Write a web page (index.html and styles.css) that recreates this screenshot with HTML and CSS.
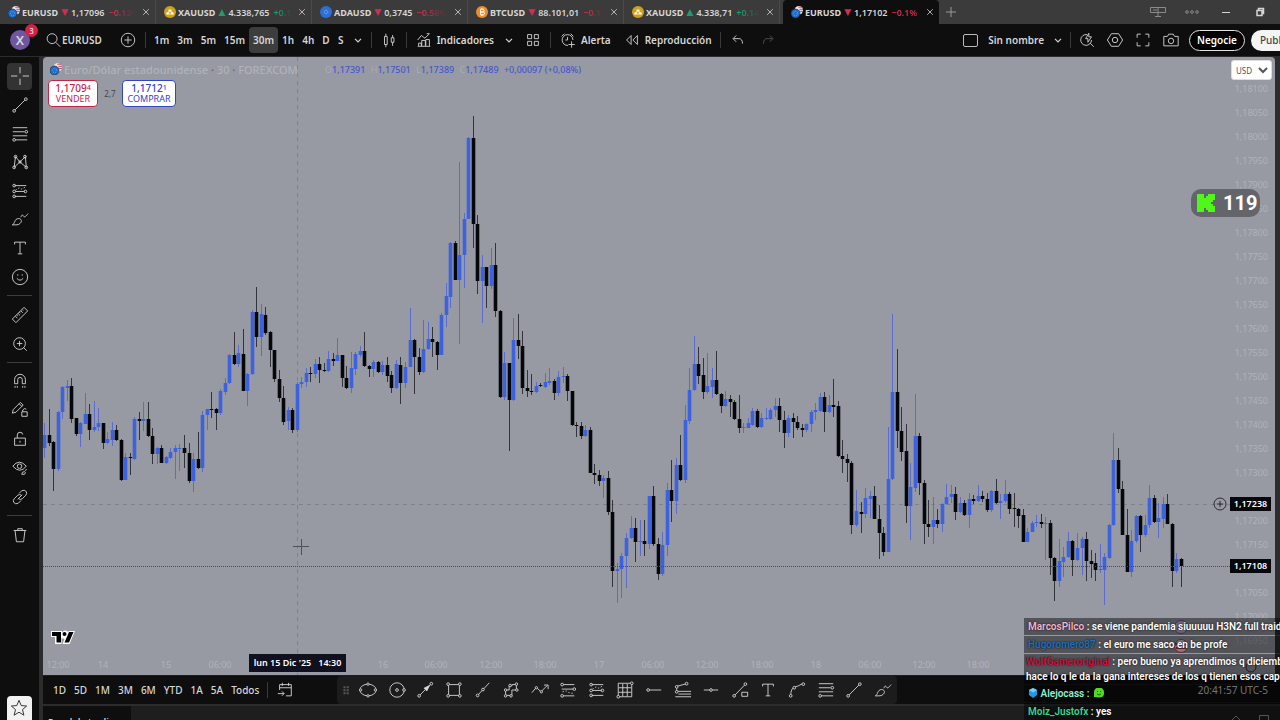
FILE: index.html
```html
<!DOCTYPE html>
<html lang="es">
<head>
  <meta charset="UTF-8">
  <meta name="viewport" content="width=device-width, initial-scale=1.0">
  <title>EURUSD 1,17102</title>
  <link rel="stylesheet" href="styles.css">
</head>
<body>
  <!-- Icon set -->
  <svg class="sprite" aria-hidden="true">
    <symbol id="i-close" viewBox="0 0 20 20"><path d="M3 3l14 14M17 3L3 17"/></symbol>
    <symbol id="i-chev" viewBox="0 0 20 20"><path d="M5 8l5 5 5-5"/></symbol>
    <symbol id="i-search" viewBox="0 0 20 20"><circle cx="9" cy="8.500" r="5.500"/><path d="M13 12.500l5 5"/></symbol>
    <symbol id="i-pluscircle" viewBox="0 0 20 20"><circle cx="10" cy="10" r="7.500"/><path d="M10 6v8M6 10h8"/></symbol>
    <symbol id="i-candles" viewBox="0 0 20 20"><path d="M5 6h3v9H5zM6.500 3v3M6.500 15v3M12.500 7.500h3v5h-3zM14 4.500v3M14 12.500v4"/></symbol>
    <symbol id="i-ind" viewBox="0 0 20 20"><path d="M3 10l4-5 4 3 5-5M13 3h3M4 16.500v-3h3v3M7.500 16.500v-6h4v6M12 16.500v-7h4v7M3 17h14"/></symbol>
    <symbol id="i-grid4" viewBox="0 0 20 20"><path d="M4 4h4.500v4.500H4zM11.500 4H16v4.500h-4.500zM4 11.500h4.500V16H4zM11.500 11.500H16V16h-4.500z"/></symbol>
    <symbol id="i-alarm" viewBox="0 0 20 20"><path d="M15.500 10A6 6 0 1 0 10 16M9.500 6.500V10H7M3 6l3-3M13 3l3 3M14 11.500v7M10.500 15h7"/></symbol>
    <symbol id="i-rewind" viewBox="0 0 20 20"><path d="M9 5v10l-5-5zM16 5v10l-5-5z"/></symbol>
    <symbol id="i-undo" viewBox="0 0 20 20"><path d="M8 5L4.500 8.500 8 12M5 8.500h6q4 0 4 5.500"/></symbol>
    <symbol id="i-redo" viewBox="0 0 20 20"><path d="M12 5l3.500 3.500L12 12M15 8.500H9q-4 0-4 5.500"/></symbol>
    <symbol id="i-quick" viewBox="0 0 20 20"><path d="M10 4a6 6 0 1 0 5 6M13.500 13.500l4 4M12 2.500L8.500 8.500H11v4l4-6h-3z"/></symbol>
    <symbol id="i-hex" viewBox="0 0 20 20"><path d="M6 3h8l4.500 7-4.500 7H6L1.500 10z"/><circle cx="10" cy="10" r="3"/></symbol>
    <symbol id="i-full" viewBox="0 0 20 20"><path d="M3.500 7.500v-4h4M12.500 3.500h4v4M16.500 12.500v4h-4M7.500 16.500h-4v-4"/></symbol>
    <symbol id="i-camera" viewBox="0 0 20 20"><path d="M2 6h4l1.500-2.500h5L14 6h4v10.500H2z"/><circle cx="10" cy="11" r="3"/></symbol>
    <symbol id="i-cross" viewBox="0 0 20 20"><path d="M10 0v7M10 13v7M0 10h7M13 10h7"/></symbol>
    <symbol id="i-trend" viewBox="0 0 20 20"><circle cx="3.500" cy="16.500" r="1.500"/><circle cx="16.500" cy="3.500" r="1.500"/><path d="M4.600 15.400L15.400 4.600"/></symbol>
    <symbol id="i-fib" viewBox="0 0 20 20"><path d="M2 3h16M2 7.500h13M2 12h16M5 16.500h13"/><circle cx="17" cy="7.500" r="1.500"/><circle cx="3.500" cy="16.500" r="1.500"/></symbol>
    <symbol id="i-pattern" viewBox="0 0 20 20"><path d="M5 4L3.500 16 16 4l1 12L10 10 5 4"/><circle cx="5" cy="4" r="1.500"/><circle cx="3.500" cy="16" r="1.500"/><circle cx="15.500" cy="4" r="1.500"/><circle cx="17" cy="16" r="1.500"/><circle cx="10" cy="10" r="1.300"/></symbol>
    <symbol id="i-forecast" viewBox="0 0 20 20"><path d="M4 4h13M5 10.500h10M4 16h13"/><path d="M5 9l4-2.500 3 1.500 5-3" stroke-dasharray="1.500 2"/><circle cx="3.500" cy="4" r="1.500"/><circle cx="3.500" cy="10.500" r="1.500"/><circle cx="3.500" cy="16" r="1.500"/><circle cx="16" cy="10.500" r="1.500"/></symbol>
    <symbol id="i-brush" viewBox="0 0 20 20"><path d="M1.500 16.500c3-1 2-7 7-7 3 0 4 3 2 5-2 2.500-5 2-9 2zM11 8c1-3 2-3 3-1 .500 1 2 1 5-3"/></symbol>
    <symbol id="i-text" viewBox="0 0 20 20"><path d="M4 6V3.500h12V6M10 3.500v13M7.500 16.500h5"/></symbol>
    <symbol id="i-smile" viewBox="0 0 20 20"><circle cx="10" cy="10" r="8.500"/><path d="M6.500 11.500q3.500 4 7 0M7.500 7v1.500M12.500 7v1.500"/></symbol>
    <symbol id="i-ruler" viewBox="0 0 20 20"><path d="M1.500 14.500L14.500 1.500l4 4-13 13zM5 11.500l2 2M8 8.500l2 2M11 5.500l2 2M6.500 10l1 1M9.500 7l1 1M12.500 4l1 1"/></symbol>
    <symbol id="i-zoom" viewBox="0 0 20 20"><circle cx="9.500" cy="9.500" r="6.500"/><path d="M14 14l3.500 3.500M9.500 6.500v6M6.500 9.500h6"/></symbol>
    <symbol id="i-magnet" viewBox="0 0 20 20"><path d="M4 13V8.500a6 6 0 0 1 12 0V13h-3.500V8.500a2.500 2.500 0 0 0-5 0V13zM4.500 15.500v2M7 15.500v2M13 15.500v2M15.500 15.500v2"/></symbol>
    <symbol id="i-penlock" viewBox="0 0 20 20"><path d="M1.500 13.500L2.500 9.500l8-8 3 3-8 8zM9 3l3 3M12 12h6v5h-6zM13 12v-2q2-2.500 4-1"/></symbol>
    <symbol id="i-lock" viewBox="0 0 20 20"><path d="M4 9h12v8H4zM7 9V5.500q0-3 3-3t3 2.500M10 12v2"/></symbol>
    <symbol id="i-eye" viewBox="0 0 20 20"><path d="M2 8q7-9 15 0-7 9-15 0zM12 17q0-3 3-3 2 1 0 3zM15.500 13l2-1.500"/><circle cx="9.500" cy="8" r="2.500"/></symbol>
    <symbol id="i-link" viewBox="0 0 20 20"><path d="M9 6l3-3q3-1.500 5 1 1 2-.500 4l-4 4q-2 1.500-4 0M11 14l-3 3q-3 1.500-5-1-1-2 .500-4l4-4q2-1.500 4 0M7.500 12.500l5-5"/></symbol>
    <symbol id="i-trash" viewBox="0 0 20 20"><path d="M3 5h14M7.500 5V3h5v2M4.500 5l1.500 12.500h8L15.500 5"/></symbol>
    <symbol id="i-star" viewBox="0 0 20 20"><path d="M10 1.500l2.500 5.800 6 .500-4.600 4 1.500 6.200L10 14.700 4.600 18l1.500-6.200-4.600-4 6-.500z"/></symbol>
    <symbol id="i-ellipse" viewBox="0 0 20 20"><ellipse cx="10" cy="10" rx="9" ry="6.500"/><circle class="dot" cx="10" cy="3.500" r="1.300"/><circle class="dot" cx="10" cy="16.500" r="1.300"/><circle class="dot" cx="1.800" cy="10" r="1.300"/><circle class="dot" cx="18.200" cy="10" r="1.300"/></symbol>
    <symbol id="i-circle" viewBox="0 0 20 20"><circle cx="10" cy="10" r="8"/><circle cx="10" cy="10" r="1.500"/><circle class="dot" cx="17.800" cy="10" r="1.500"/></symbol>
    <symbol id="i-arrow" viewBox="0 0 20 20"><circle cx="3.500" cy="16.500" r="1.500"/><circle cx="17" cy="3" r="1.500"/><path d="M4.600 15.400L16 4"/><path class="solid" d="M15 5L9 8l3 3z"/></symbol>
    <symbol id="i-rect" viewBox="0 0 20 20"><path d="M4 4h12v12H4z"/><circle class="dot" cx="3.500" cy="3.500" r="1.500"/><circle class="dot" cx="16.500" cy="3.500" r="1.500"/><circle class="dot" cx="3.500" cy="16.500" r="1.500"/><circle class="dot" cx="16.500" cy="16.500" r="1.500"/></symbol>
    <symbol id="i-ray" viewBox="0 0 20 20"><circle cx="4" cy="16" r="1.500"/><circle cx="10" cy="9.500" r="1.500"/><path d="M5 15l4-4.500M11 8.500l6-6.500"/></symbol>
    <symbol id="i-poly" viewBox="0 0 20 20"><path d="M4 16V10h4V5.500h3V4h5v6h-5v6z"/><circle class="dot" cx="4" cy="10" r="1.400"/><circle class="dot" cx="4" cy="16.500" r="1.400"/><circle class="dot" cx="9" cy="5" r="1.400"/><circle class="dot" cx="16" cy="3.500" r="1.400"/><circle class="dot" cx="16.500" cy="10" r="1.400"/><circle class="dot" cx="10" cy="16.500" r="1.400"/></symbol>
    <symbol id="i-zigzag" viewBox="0 0 20 20"><path d="M1 13l5-6 5 5 7-7M14.500 4.500H19V9"/><circle class="dot" cx="6" cy="7.500" r="1.300"/><circle class="dot" cx="11.500" cy="12" r="1.300"/></symbol>
    <symbol id="i-long" viewBox="0 0 20 20"><path d="M4 4h13M3 9h13M4 16.500h13"/><path d="M4 12l4-1 3 2 6 1" stroke-dasharray="1.500 2"/><circle class="dot" cx="3.500" cy="4" r="1.500"/><circle class="dot" cx="3.500" cy="16.500" r="1.500"/><circle class="dot" cx="17" cy="9" r="1.500"/></symbol>
    <symbol id="i-mesh" viewBox="0 0 20 20"><path d="M2.500 2.500h15v15h-15zM7.500 3v14M12.500 3v14M3 7.500h14M3 12.500h14"/><circle class="dot" cx="17.500" cy="2.500" r="1.500"/><circle class="dot" cx="2.500" cy="17.500" r="1.500"/></symbol>
    <symbol id="i-hray" viewBox="0 0 20 20"><circle cx="3.500" cy="10" r="1.500"/><path d="M5 10h13"/></symbol>
    <symbol id="i-fan" viewBox="0 0 20 20"><path d="M3 6l11-3M3 7v4M4 11.500h15M5 14.500h14M1.500 17.500H19"/><circle class="dot" cx="14" cy="3" r="1.500"/><circle class="dot" cx="3" cy="6.500" r="1.500"/><circle class="dot" cx="3" cy="12" r="1.500"/></symbol>
    <symbol id="i-hline" viewBox="0 0 20 20"><circle cx="10" cy="10" r="1.500"/><path d="M2 10h6.500M11.500 10H18"/></symbol>
    <symbol id="i-path" viewBox="0 0 20 20"><circle cx="3.500" cy="16.500" r="1.500"/><circle cx="16" cy="3.500" r="1.500"/><path d="M4.600 15.400L15 4.600M12 12.500h6.500v4.500H12z"/></symbol>
    <symbol id="i-arc" viewBox="0 0 20 20"><path d="M3 16q0-8 5-9.500 3-.500 8-3.500"/><circle class="dot" cx="3" cy="16.500" r="1.500"/><circle class="dot" cx="7" cy="7.500" r="1.500"/><circle class="dot" cx="17" cy="3.500" r="1.500"/></symbol>
    <symbol id="i-goto" viewBox="0 0 20 20"><path d="M4 10V4h13v12.500h-6M4 7.500h13M7 2v3.500M14 2v3.500M2 14h7M6.500 11.500L9 14l-2.500 2.500"/></symbol>
    <symbol id="i-eurusd" viewBox="0 0 20 20"><circle cx="13" cy="7" r="7" fill="#e8e8f0" stroke="none"/><path d="M12 2h7M14 5.500h6M14 9h6" stroke="#d5304a" stroke-width="1.500"/><circle cx="7.500" cy="12.500" r="7.500" fill="#1f6fd0" stroke="#222"/><circle cx="7.500" cy="12.500" r="3.500" stroke="#bcd9f5" stroke-dasharray="1 2"/></symbol>
    <symbol id="i-gold" viewBox="0 0 20 20"><circle cx="10" cy="10" r="10" fill="#d0a017" stroke="none"/><path d="M8 6h4l1 3.500H7zM4.500 10.500h4l1 3.500h-6zM11.500 10.500h4l1 3.500h-6z" fill="#fff" stroke="none"/></symbol>
    <symbol id="i-ada" viewBox="0 0 20 20"><circle cx="10" cy="10" r="10" fill="#2d6fd8" stroke="none"/><circle cx="10" cy="10" r="3" stroke="#cfe0fa" stroke-dasharray="1.500 1"/></symbol>
    <symbol id="i-btc" viewBox="0 0 20 20"><circle cx="10" cy="10" r="10" fill="#ee8c28" stroke="none"/><path d="M7.500 5.500h4q2 0 2 2.200t-2 2.200h-4zM7.500 10h4.500q2.300 0 2.300 2.200t-2.300 2.300H7.500zM9 3.500v2M11.500 3.500v2M9 14.500v2M11.500 14.500v2" stroke="#fff" stroke-width="1.500"/></symbol>
  </svg>

  <div class="app">
    <!-- Window tabs -->
    <header class="tabs">
      <div class="tab"><svg class="coin"><use href="#i-eurusd"/></svg><b>EURUSD</b><i class="down">▼</i><span>1,17096</span><em class="down">−0.12%</em><button class="tab-close" aria-label="Cerrar"><svg><use href="#i-close"/></svg></button></div>
      <div class="tab"><svg class="coin"><use href="#i-gold"/></svg><b>XAUUSD</b><i class="up">▲</i><span>4.338,765</span><em class="up">+0.14%</em><button class="tab-close" aria-label="Cerrar"><svg><use href="#i-close"/></svg></button></div>
      <div class="tab"><svg class="coin"><use href="#i-ada"/></svg><b>ADAUSD</b><i class="down">▼</i><span>0,3745</span><em class="down">−0.58% /</em><button class="tab-close" aria-label="Cerrar"><svg><use href="#i-close"/></svg></button></div>
      <div class="tab"><svg class="coin"><use href="#i-btc"/></svg><b>BTCUSD</b><i class="down">▼</i><span>88.101,01</span><em class="down">−0.12%</em><button class="tab-close" aria-label="Cerrar"><svg><use href="#i-close"/></svg></button></div>
      <div class="tab"><svg class="coin"><use href="#i-gold"/></svg><b>XAUUSD</b><i class="up">▲</i><span>4.338,71</span><em class="up">+0.14%</em><button class="tab-close" aria-label="Cerrar"><svg><use href="#i-close"/></svg></button></div>
      <div class="tab active"><svg class="coin"><use href="#i-eurusd"/></svg><b>EURUSD</b><i class="down">▼</i><span>1,17102</span><em class="down">−0.1% /</em><button class="tab-close" aria-label="Cerrar"><svg><use href="#i-close"/></svg></button></div>
      <button class="tab-new" aria-label="Nueva pestaña"><svg viewBox="0 0 10 10"><path d="M5 0v10M0 5h10"/></svg></button>
      <div class="window-buttons">
        <button aria-label="Pantallas"><svg class="dim" viewBox="0 0 16 12"><path d="M.500 1.500h15v5H.500zM8 1.500v9M5 10.500h6M3 4h4"/></svg></button>
        <button aria-label="Más"><svg class="dim" viewBox="0 0 16 12"><circle cx="3" cy="6" r="1.300"/><circle cx="8" cy="6" r="1.300"/><circle cx="13" cy="6" r="1.300"/></svg></button>
        <button aria-label="Minimizar"><svg viewBox="0 0 16 12"><path d="M4 6.500h8"/></svg></button>
        <button aria-label="Restaurar"><svg viewBox="0 0 16 12"><path d="M5 4.500h5v5H5zM6.500 4V2.500h5v5H10.500" stroke-width="1.500"/></svg></button>
      </div>
    </header>

    <!-- Top toolbar -->
    <nav class="toolbar">
      <button class="avatar">X<span class="badge">3</span></button>
      <button class="symbol"><svg><use href="#i-search"/></svg>EURUSD</button>
      <button class="icon" aria-label="Comparar"><svg><use href="#i-pluscircle"/></svg></button>
      <span class="sep"></span>
      <div class="frames">
        <button>1m</button><button>3m</button><button>5m</button><button>15m</button><button class="on">30m</button><button>1h</button><button>4h</button><button>D</button><button>S</button>
        <button aria-label="Intervalos"><svg class="chev"><use href="#i-chev"/></svg></button>
      </div>
      <span class="sep"></span>
      <button class="icon" aria-label="Velas"><svg><use href="#i-candles"/></svg></button>
      <span class="sep"></span>
      <button class="labeled"><svg><use href="#i-ind"/></svg>Indicadores</button>
      <button class="small" aria-label="Favoritos"><svg class="chev"><use href="#i-chev"/></svg></button>
      <button class="icon" aria-label="Plantillas"><svg><use href="#i-grid4"/></svg></button>
      <span class="sep"></span>
      <button class="labeled"><svg><use href="#i-alarm"/></svg>Alerta</button>
      <button class="labeled"><svg><use href="#i-rewind"/></svg>Reproducción</button>
      <span class="sep"></span>
      <button class="icon" aria-label="Deshacer"><svg><use href="#i-undo"/></svg></button>
      <button class="icon off" aria-label="Rehacer"><svg><use href="#i-redo"/></svg></button>
      <div class="right">
        <button class="layout"><span class="box"></span>Sin nombre<svg class="chev"><use href="#i-chev"/></svg></button>
        <span class="sep"></span>
        <button class="icon tight" aria-label="Búsqueda rápida"><svg><use href="#i-quick"/></svg></button>
        <button class="icon tight" aria-label="Configuración"><svg><use href="#i-hex"/></svg></button>
        <button class="icon tight" aria-label="Pantalla completa"><svg><use href="#i-full"/></svg></button>
        <button class="icon tight" aria-label="Instantánea"><svg><use href="#i-camera"/></svg></button>
        <button class="trade">Negocie</button>
        <button class="publish">Publicar</button>
      </div>
    </nav>

    <div class="workspace">
      <!-- Drawing tools -->
      <aside class="tools">
        <div class="group g8">
          <button class="on" aria-label="Cruz"><svg><use href="#i-cross"/></svg></button>
          <button aria-label="Línea de tendencia"><svg><use href="#i-trend"/></svg></button>
          <button aria-label="Fibonacci"><svg><use href="#i-fib"/></svg></button>
          <button aria-label="Patrones"><svg><use href="#i-pattern"/></svg></button>
          <button aria-label="Previsión"><svg><use href="#i-forecast"/></svg></button>
          <button aria-label="Pincel"><svg><use href="#i-brush"/></svg></button>
          <button aria-label="Texto"><svg><use href="#i-text"/></svg></button>
          <button aria-label="Iconos"><svg><use href="#i-smile"/></svg></button>
        </div>
        <div class="group g2">
          <button aria-label="Medir"><svg><use href="#i-ruler"/></svg></button>
          <button aria-label="Acercar"><svg><use href="#i-zoom"/></svg></button>
        </div>
        <div class="group g5">
          <button aria-label="Imán"><svg><use href="#i-magnet"/></svg></button>
          <button aria-label="Modo dibujo"><svg><use href="#i-penlock"/></svg></button>
          <button aria-label="Bloquear"><svg><use href="#i-lock"/></svg></button>
          <button aria-label="Ocultar"><svg><use href="#i-eye"/></svg></button>
          <button aria-label="Sincronizar"><svg><use href="#i-link"/></svg></button>
        </div>
        <div class="group g1">
          <button aria-label="Eliminar"><svg><use href="#i-trash"/></svg></button>
        </div>
        <button class="favorites" aria-label="Favoritos"><svg><use href="#i-star"/></svg></button>
      </aside>

      <main class="main">
        <section class="chart">
          <div class="pane">
            <svg class="plot" id="plot"></svg>
            <div class="legend">
              <div class="legend-title"><svg class="coin"><use href="#i-eurusd"/></svg><span class="title">Euro/Dólar estadounidense <s>·</s> 30 <s>·</s> FOREXCOM</span>
                <span class="ohlc">O<b>1,17391</b> H<b>1,17501</b> L<b>1,17389</b> C<b>1,17489</b> <b>+0,00097 (+0,08%)</b></span></div>
              <div class="quotes">
                <button class="sell"><span>1,1709<sup>4</sup></span>VENDER</button>
                <span class="spread">2,7</span>
                <button class="buy"><span>1,1712<sup>1</sup></span>COMPRAR</button>
              </div>
            </div>
            <svg class="logo" viewBox="0 0 26 15"><path d="M1 1h11v2a3 3 0 0 1 3-2.500A3 3 0 0 1 18 2l1-1h6l-5.500 13h-7l2-5-3-1v6H5V7H1z" fill="#fff"/><path d="M2 2h9v10.500H6.500V6H2zM19 2h4.500L19 12.500h-4.500z" fill="#000"/><circle cx="14.500" cy="4" r="2" fill="#000"/></svg>
          </div>
          <div class="prices" id="prices">
            <select class="currency" aria-label="Moneda"><option>USD</option></select>
          </div>
          <svg class="times" id="times"></svg>
          <span class="price-tag hover"><svg><use href="#i-pluscircle"/></svg>1,17238</span>
          <span class="price-tag last">1,17108</span>
          <span class="time-tag">lun 15 Dic '25 &nbsp; 14:30</span>
          <svg class="events" viewBox="0 0 100 56"><circle cx="30" cy="8" r="6.500" fill="#cdb9dc" stroke="#7a4f9a"/><path d="M26 11l3-6 2 4 3-4" stroke="#7a4f9a"/><circle cx="30" cy="27" r="6.500" fill="#e8e8ee" stroke="#c8374a"/><path d="M24 25h12" stroke="#3a5fae" stroke-width="3"/><path d="M25 29h10" stroke="#c8374a" stroke-width="2"/><circle cx="100" cy="48" r="5" stroke="#333"/></svg>
        </section>

        <section class="ranges">
          <button>1D</button><button>5D</button><button>1M</button><button>3M</button><button>6M</button><button>YTD</button><button>1A</button><button>5A</button><button>Todos</button>
          <span class="sep"></span>
          <button aria-label="Ir a"><svg><use href="#i-goto"/></svg></button>
          <span class="clock">20:41:57 UTC-5</span>
          <div class="palette">
            <span class="grip">⠿</span>
            <div class="palette-items">
              <button aria-label="Elipse"><svg><use href="#i-ellipse"/></svg></button>
              <button aria-label="Círculo"><svg><use href="#i-circle"/></svg></button>
              <button aria-label="Flecha"><svg><use href="#i-arrow"/></svg></button>
              <button aria-label="Rectángulo"><svg><use href="#i-rect"/></svg></button>
              <button aria-label="Rayo"><svg><use href="#i-ray"/></svg></button>
              <button aria-label="Polígono"><svg><use href="#i-poly"/></svg></button>
              <button aria-label="Zigzag"><svg><use href="#i-zigzag"/></svg></button>
              <button aria-label="Posición larga"><svg><use href="#i-long"/></svg></button>
              <button aria-label="Posición corta"><svg><use href="#i-forecast"/></svg></button>
              <button aria-label="Cuadrícula"><svg><use href="#i-mesh"/></svg></button>
              <button aria-label="Rayo horizontal"><svg><use href="#i-hray"/></svg></button>
              <button aria-label="Extensión"><svg><use href="#i-fan"/></svg></button>
              <button aria-label="Línea horizontal"><svg><use href="#i-hline"/></svg></button>
              <button aria-label="Información"><svg><use href="#i-path"/></svg></button>
              <button aria-label="Texto"><svg><use href="#i-text"/></svg></button>
              <button aria-label="Curva"><svg><use href="#i-arc"/></svg></button>
              <button aria-label="Fibonacci"><svg><use href="#i-fib"/></svg></button>
              <button aria-label="Línea"><svg><use href="#i-trend"/></svg></button>
              <button aria-label="Pincel"><svg><use href="#i-brush"/></svg></button>
            </div>
          </div>
        </section>

        <footer class="panel">
          <button class="panel-tab">Panel de trading</button>
          <svg class="panel-icons" viewBox="0 0 40 14"><path d="M2 14l4-4 4 4M29.500 14V9.500h9V14"/></svg>
        </footer>
      </main>
    </div>

    <!-- Stream overlays -->
    <div class="viewers"><svg viewBox="0 0 18 18"><path d="M0 0h7v4h2V2h2V0h7v6h-2v2h-2v2h2v2h2v6h-7v-2H9v-2H7v4H0z"/></svg>119</div>
    <div class="chat">
      <p><b class="pink">MarcosPilco</b> : se viene pandemia siuuuuu H3N2 full traiding</p>
      <p><b class="blue">Hugoromero87</b> : el euro me saco en be profe</p>
      <p class="two"><b class="red">WolfGameroriginal</b> : pero bueno ya aprendimos q diciembre<br>hace lo q le da la gana intereses de los q tienen esos capitales</p>
      <p><svg viewBox="0 0 10 10"><path d="M5 0l4 2v5L5 10 1 7V2z" fill="#1f9be0"/><path d="M1 2l4 2.500L9 2 5 0z" fill="#6fd0ff"/></svg> <b class="mint">Alejocass :</b> &nbsp;<svg viewBox="0 0 10 10"><path d="M0 9V4a5 4.500 0 0 1 10 0v2a5 4 0 0 1-5 3.500z" fill="#53d824"/><path d="M3 6q2 2 4 0M3.500 3v1M6.500 3v1" stroke="#17610a"/></svg></p>
      <p><b class="green">Moiz_Justofx</b> : yes</p>
    </div>
  </div>
  <script src="chart.js"></script>
</body>
</html>
```
FILE: styles.css
```css
* { box-sizing: border-box; }
body, html {
  margin: 0;
  height: 100%;
  background: #2c2c2d;
  font-family: "Noto Sans", sans-serif;
  font-size: 10px;
  color: #d6d6d6;
  overflow: hidden;
}
button {
  border: none;
  background: none;
  padding: 0;
  color: inherit;
  font: inherit;
  cursor: pointer;
}
svg { fill: none; stroke: currentColor; display: block; }
.sprite { position: absolute; width: 0; height: 0; }
.dot { fill: #1c1c1c; }
.solid { fill: currentColor; }
.app {
  position: relative;
  height: 100vh;
  display: flex;
  flex-direction: column;
  overflow: hidden;
}

/* Tabs */
.tabs {
  height: 24px;
  flex: none;
  display: flex;
  background: #3b3b3b;
}
.tab {
  flex: 0 0 156px;
  min-width: 0;
  display: flex;
  align-items: center;
  padding-left: 8px;
  border-right: 1px solid #4a4a4a;
  font-size: 9px;
  font-weight: 600;
}
.tab.active { background: #0e0e0e; border: none; margin-left: 3px; border-radius: 4px 4px 0 0; }
.coin { width: 12px; height: 12px; flex: none; margin-right: 2px; }
.tab b { font-weight: 700; }
.tab i { font-family: "DejaVu Sans", sans-serif; font-style: normal; font-size: 9px; width: 13px; text-align: center; flex: none; }
.tab em {
  font-style: normal;
  flex: 1;
  min-width: 0;
  margin-left: 4px;
  white-space: nowrap;
  overflow: hidden;
  mask-image: linear-gradient(to right, #000 20%, transparent 95%);
}
.tab.active em { mask-image: linear-gradient(to right, #000 80%, transparent); }
.down { color: #d22d50; }
.up { color: #209b70; }
.tab-close { width: 18px; height: 18px; padding: 5px; flex: none; }
.tab-close svg { width: 8px; height: 8px; stroke-width: 2; }
.tab-new { width: 24px; padding: 0 7px; color: #999; }
.tab-new svg { width: 10px; height: 10px; }
.window-buttons { margin-left: auto; display: flex; gap: 18px; padding-right: 12px; }
.window-buttons svg { width: 16px; height: 12px; }
.window-buttons .dim { color: #8b8b8b; }

/* Top toolbar */
.toolbar {
  height: 32px;
  flex: none;
  display: flex;
  align-items: center;
  padding-left: 10px;
  background: #0e0e0e;
  font-weight: 600;
  white-space: nowrap;
}
.toolbar svg { width: 18px; height: 18px; flex: none; }
.toolbar .chev { width: 12px; height: 12px; stroke-width: 2; }
.toolbar button { display: flex; align-items: center; justify-content: center; }
.avatar {
  position: relative;
  width: 20px;
  height: 20px;
  flex: none;
  border-radius: 50%;
  background: #6f56a0;
  font-size: 13px;
}
.badge {
  position: absolute;
  top: -6px;
  right: -8px;
  width: 13px;
  height: 13px;
  border-radius: 50%;
  background: #d81f45;
  font-size: 8px;
  line-height: 13px;
}
.toolbar .symbol { margin-left: 14px; width: 60px; justify-content: flex-start; }
.icon { width: 30px; height: 26px; }
.symbol + .icon { margin-left: 9px; }
.icon.off { color: #555; }
.icon.tight { width: 28px; }
.sep { width: 1px; height: 16px; background: #3a3a3a; margin: 0 2px; flex: none; }
.frames { display: flex; padding: 0 1px 0 2px; }
.frames button { padding: 0 4px; height: 26px; border-radius: 4px; min-width: 14px; }
.frames .on { background: #3d3d3d; }
.labeled { gap: 4px; height: 26px; }
.toolbar .labeled { padding: 0 6px; }
.small { width: 18px; }
.right { margin-left: auto; display: flex; align-items: center; }
.layout { gap: 8px; }
.toolbar .layout { padding-right: 4px; }
.box { width: 15px; height: 13px; border: 1px solid #bbb; border-radius: 2px; margin-right: 2px; }
.toolbar .trade {
  width: 56px;
  height: 21px;
  margin: 0 6px 0 4px;
  border: 1px solid #e5e5e5;
  border-radius: 11px;
  background: #000;
  color: #fff;
}
.toolbar .publish {
  width: 29px;
  height: 21px;
  padding-left: 9px;
  justify-content: flex-start;
  border-radius: 11px 0 0 11px;
  background: #f4f4f4;
  color: #444;
  overflow: hidden;
  font-weight: 500;
}

/* Left tools */
.workspace { flex: 1; min-height: 0; display: flex; gap: 4px; margin-top: 1px; }
.tools {
  width: 39px;
  flex: none;
  display: flex;
  flex-direction: column;
  padding: 5px 7px 0;
  background: #0e0e0e;
}
.group { display: grid; grid-auto-rows: 1fr; padding-bottom: 4px; margin-bottom: 4px; border-bottom: 1px solid #3c3c3c; }
.g8 { height: 234px; }
.g2 { height: 63px; }
.g5 { height: 149px; }
.g1 { height: 34px; border: none; }
.group button { width: 25px; border-radius: 4px; display: grid; place-items: center; margin: 1px 0; }
.group .on { background: #333; }
.tools svg { width: 18px; height: 18px; }
.favorites {
  width: 25px;
  height: 24px;
  margin-top: auto;
  padding: 3px;
  border-radius: 4px 4px 0 0;
  background: #f2f2f2;
  color: #222;
}

/* Chart */
.main { flex: 1; min-width: 0; display: flex; flex-direction: column; }
.chart {
  position: relative;
  flex: 1;
  min-height: 0;
  margin-right: 5px;
  display: grid;
  grid-template-columns: 1fr 45px;
  grid-template-rows: 1fr 20px;
  border-radius: 4px 4px 0 0;
  background: #979aa3;
  overflow: hidden;
}
.pane { position: relative; min-height: 0; }
.plot { position: absolute; inset: 0; width: 100%; height: 100%; overflow: visible; }
.plot .buy-candle { fill: #3c62e0; stroke: none; }
.plot .sell-candle { fill: #06070a; stroke: none; }
.plot .buy-wick { stroke: #5a6bd2; }
.plot .sell-wick { stroke: #33353b; }
.cross-line { stroke: #7f828b; stroke-dasharray: 4 4; }
.last-line { stroke: #4a4c54; stroke-dasharray: 1 1; }
.cursor { stroke: #4f5158; }
.legend { position: relative; padding: 5px; }
.legend-title { display: flex; align-items: center; height: 14px; padding-left: 2px; color: #b0b2b9; }
.legend-title .title { font-size: 11px; width: 261px; font-weight: 500; white-space: nowrap; }
.legend-title s { text-decoration: none; color: #5e6068; }
.ohlc { font-size: 9px; color: #aaacb4; white-space: pre; }
.ohlc b { font-weight: 500; color: #4757cf; margin-right: 3px; }
.quotes { display: flex; align-items: center; margin-top: 4px; }
.quotes button {
  height: 27px;
  border: 1px solid;
  border-radius: 4px;
  background: #fff;
  font-size: 9px;
  line-height: 10px;
}
.quotes button span { display: block; font-size: 10px; line-height: 11px; font-weight: 500; }
.quotes sup { font-size: 7px; line-height: 0; vertical-align: 2px; }
.sell { width: 50px; color: #c62345; }
.quotes .buy { width: 54px; color: #3345c5; }
.sell, .buy { flex: none; }
.spread { width: 24px; text-align: center; font-size: 8px; color: #44464d; }
.logo { position: absolute; left: 7px; bottom: 10px; width: 26px; height: 15px; stroke: none; }
.prices {
  display: flex;
  flex-direction: column;
  gap: 8px;
  align-items: flex-end;
  padding-right: 3px;
  grid-row: span 2;
  font-size: 9px;
  line-height: 16px;
  color: #b0b2ba;
  min-height: 0;
  overflow: hidden;
}
.prices span { flex: none; margin-right: 4px; }
.prices .covered { visibility: hidden; }
.currency {
  width: 41px;
  height: 20px;
  flex: none;
  margin: 3px 0 -7px;
  border: 1px solid #ddd;
  border-radius: 3px;
  background: #fff;
  color: #555;
  font: 8px "Noto Sans", sans-serif;
}
.times { width: 100%; height: 20px; font-size: 9px; overflow: hidden; }
.times text { fill: #b0b2ba; stroke: none; text-anchor: middle; }
.price-tag, .time-tag {
  position: absolute;
  background: #07070c;
  color: #fff;
  font-weight: 600;
  text-align: center;
}
.price-tag { right: 4px; width: 41px; font-size: 9px; line-height: 14px; }
.price-tag svg { position: absolute; left: -18px; top: -1px; width: 16px; height: 16px; color: #111; }
.hover { top: 440px; }
.last { top: 502px; }
.time-tag { left: 206px; bottom: 3px; width: 97px; font-size: 9px; line-height: 18px; background: #10101f; white-space: nowrap; }
.events { position: absolute; right: 24px; bottom: 0; width: 100px; height: 56px; overflow: visible; }

/* Bottom bars */
.ranges {
  position: relative;
  height: 29px;
  flex: none;
  display: flex;
  align-items: center;
  gap: 8px;
  padding: 0 12px 0 10px;
  background: #0e0e0e;
  font-weight: 600;
  border-top: 1px solid #1d1d1d;
}
.ranges button { font-size: 10px; font-weight: 500; }
.ranges .sep { margin: 0; }
.ranges svg { width: 18px; height: 18px; }
.ranges .clock { margin-left: auto; color: #d0d0d0; font-weight: 400; }
.palette {
  position: absolute;
  left: 294px;
  top: 0;
  height: 28px;
  display: flex;
  align-items: center;
  border-radius: 4px;
  background: #1c1c1c;
}
.palette-items { display: grid; grid-template-columns: repeat(19, 1fr); width: 543px; }
.palette-items button { display: grid; place-items: center; }
.grip { width: 17px; color: #555; text-align: center; font-size: 11px; }
.panel { height: 14px; flex: none; margin-top: 2px; display: flex; justify-content: space-between; background: #1e1e1e; overflow: hidden; }
.panel-tab { width: 88px; height: 30px; padding-left: 5px; text-align: left; background: #0e0e0e; font-weight: 600; font-size: 9px; }
.panel-icons { width: 40px; height: 14px; margin-right: 10px; color: #999; }

/* Overlays */
.viewers {
  position: absolute;
  right: 20px;
  top: 189px;
  width: 69px;
  height: 28px;
  display: flex;
  align-items: center;
  gap: 8px;
  padding-left: 6px;
  border-radius: 10px;
  background: #63656a;
  color: #fff;
  font: 700 20px Roboto, sans-serif;
}
.viewers svg { width: 18px; height: 18px; fill: #4ff818; stroke: none; }
.chat {
  position: absolute;
  right: 0;
  bottom: 0;
  width: 256px;
  height: 102px;
  overflow: hidden;
  color: #fff;
  font: 600 10px/17px Roboto, sans-serif;
}
.chat p {
  margin: 0 0 1px;
  padding-left: 4px;
  white-space: nowrap;
  background: rgba(0, 0, 0, 0.45);
  text-shadow: 0 0 2px #000;
}
.chat .two { padding-left: 2px; line-height: 15px; }
.chat svg { display: inline-block; width: 10px; height: 10px; vertical-align: -1px; stroke: none; }
.chat b { font-weight: 600; }
.pink { color: #f3b6cd; }
.blue { color: #1e6fbd; }
.red { color: #d0103f; }
.mint { color: #8df0cf; }
.green { color: #35d695; }
```
FILE: chart.js
```js
// One candle per entry: direction, high, body top, body bottom, low
const candles = `
u423,435,448,458 d409,435,443,446 d441,442,469,491 u411,412,469,471 u386,387,412,419 u380,386,388,401
d378,386,419,423 d418,418,434,436 u422,423,434,447 u393,414,424,424 d404,414,430,440 u401,427,430,432
u408,423,427,431 d423,423,443,449 u432,439,443,444 u422,430,440,446 d425,430,440,441 d439,440,480,481
u453,457,480,480 d453,457,458,475 u417,419,459,460 d412,419,421,440 u402,419,421,431 d402,419,436,437
d428,436,454,464 u447,448,454,464 d445,448,463,463 u456,457,463,464 u448,452,458,459 u445,448,452,479
u444,448,449,471 d435,448,453,468 d443,453,481,483 u453,459,481,492 d432,459,468,469 u411,415,468,472
u409,409,415,430 d392,409,410,418 d408,409,413,430 u389,391,413,415 u378,383,392,395 u354,355,383,384
d332,355,364,365 u345,353,364,367 d329,354,391,391 u373,374,391,406 u310,312,374,375 d287,312,337,347
u304,314,337,356 d307,315,333,335 d331,332,350,367 d350,350,379,382 d370,379,398,402 d386,398,422,425
u407,410,421,430 d408,410,430,433 u382,384,430,432 u377,382,384,388 u368,373,382,387 d367,373,374,382
u359,364,374,378 d357,364,370,383 d363,370,371,372 u351,359,371,372 d353,359,361,366 u338,355,361,361
d355,355,378,387 d366,378,388,389 u352,368,388,393 u352,354,369,375 u346,351,355,357 d332,351,366,367
d365,366,369,377 u360,362,369,377 d361,362,372,373 u361,365,372,375 d357,365,376,382 d371,375,388,393
u360,364,388,389 d357,365,383,404 u362,367,383,388 u308,340,367,367 d339,340,357,394 d348,357,372,375
u320,349,372,373 u322,339,349,350 d327,339,342,357 d341,342,355,370 u313,315,355,355 u283,296,315,327
u242,243,297,308 d241,243,280,280 u162,255,280,344 u213,219,255,288 u137,138,219,219 d116,138,224,248
d215,224,281,294 u255,267,281,323 d267,267,286,308 u248,265,286,289 d243,265,311,317 d310,311,397,398
u352,363,397,400 d363,363,400,451 u318,340,400,401 d314,340,346,359 d331,346,388,394 d370,388,391,397
d374,391,392,395 u382,386,392,393 d383,385,386,387 u373,382,387,388 u368,381,383,385 d379,381,393,400
u371,377,393,396 u367,376,377,383 d374,376,391,401 d391,391,425,426 d422,425,426,437 d422,426,436,439
u425,430,436,437 d427,430,473,473 d464,473,475,484 d470,475,481,486 u475,478,481,498 d471,478,512,515
d500,512,571,587 u563,569,571,603 u553,556,569,598 u533,538,556,588 u516,528,538,539 d518,528,542,562
u520,541,542,556 d520,541,544,556 u496,496,544,549 d486,496,544,546 d538,544,574,580 u532,545,574,576
u483,490,545,556 d460,490,501,522 u458,465,501,514 d435,465,480,481 u405,420,480,483 u368,390,421,424
u336,364,390,391 d347,364,376,384 d358,375,392,399 u353,386,392,394 u368,380,387,398 d351,380,394,395
d393,394,406,413 u391,399,406,407 d395,399,402,417 d400,402,419,420 d395,419,428,433 u423,427,428,433
u418,423,428,428 u408,411,425,426 d409,411,427,428 u413,418,427,428 u408,418,419,420 u408,410,419,420
u398,406,410,417 d398,406,420,432 d411,420,433,448 u415,418,433,437 d413,418,422,438 d416,422,428,430
d424,428,430,437 u423,424,430,432 u410,412,424,432 u403,410,412,420 u393,397,411,412 d392,397,412,432
u395,405,412,413 d379,405,407,417 d401,406,456,457 d440,456,459,473 d454,459,463,482 d461,463,525,534
u490,511,525,527 d502,512,514,533 u488,498,514,518 u491,496,499,518 d486,496,519,519 d505,519,533,559
d527,533,552,556 u427,479,552,552 u314,392,479,480 d349,392,431,448 d407,431,452,461 d424,451,506,523
u463,487,506,540 u394,436,488,492 d433,436,483,495 d480,483,524,544 d500,524,527,537 u497,520,527,544
d509,520,524,528 u503,504,524,532 u484,497,504,505 u485,494,497,503 d487,494,512,520 u497,503,512,513
d500,503,515,516 u493,499,515,528 d495,499,501,504 u485,496,501,502 d491,496,499,502 d493,499,510,512
u490,491,510,512 d479,491,503,504 u494,501,503,519 u480,494,501,503 d492,494,509,514 d493,508,509,527
d508,509,516,528 d509,515,542,542 u528,532,542,542 u521,523,532,532 u515,522,523,527 d514,522,524,528
u517,523,524,560 d520,523,558,575 d557,558,581,601 u539,561,581,587 u547,557,562,577 u532,541,557,558
d540,541,560,576 u533,548,560,561 u537,539,548,575 d532,539,561,581 d550,561,564,578 d553,563,570,581
u544,569,570,573 u553,557,570,605 u524,525,558,559 u433,460,525,526 d448,460,489,493 d481,489,535,535
d509,535,572,572 u530,541,572,577 u515,516,541,543 d515,516,535,552 u515,525,535,537 u485,498,525,528
d495,498,522,523 u503,518,522,538 u497,504,519,528 d494,504,524,524 d523,524,571,587 u553,559,571,573
d558,559,566,587`.trim().split(/\s+/);

const top0 = 57;
const step = 4.51;
let out = '<path class="cross-line" d="M254.5 0V620M0 447.5H1187"/>';

candles.forEach(function (c, i) {
  const side = c[0] === 'u' ? 'buy' : 'sell';
  const v = c.slice(1).split(',').map(n => n - top0);
  const x = 1.7 + i * step;
  const wx = Math.floor(x) + 0.5;
  out += `<path class="${side}-wick" d="M${wx} ${v[0]}V${v[3]}"/>`;
  out += `<rect class="${side}-candle" x="${(wx - 1.8).toFixed(1)}" y="${v[1]}" width="3.600" height="${Math.max(1, v[2] - v[1])}"/>`;
});

out += '<path class="last-line" d="M0 509.5H1187"/>';
out += '<path class="cursor" d="M258.5 482v16M250 489.5h16"/>';
document.getElementById('plot').innerHTML = out;

// Price scale, 0.00050 per row; rows under a price tag stay blank
const prices = document.getElementById('prices');
for (let p = 18100; p >= 16950; p -= 50) {
  const s = document.createElement('span');
  if (p === 17250 || p === 17100) {
    s.className = 'covered';
  }
  s.textContent = '1,' + p;
  prices.appendChild(s);
}

// Time scale
const times = [[15, '12:00'], [60, '14'], [123, '15'], [177, '06:00'], [340, '16'], [393, '06:00'],
  [448, '12:00'], [502, '18:00'], [556, '17'], [610, '06:00'], [664, '12:00'], [719, '18:00'],
  [773, '18'], [827, '06:00'], [881, '12:00'], [935, '18:00']];
document.getElementById('times').innerHTML =
  times.map(t => `<text x="${t[0]}" y="13">${t[1]}</text>`).join('');
```
